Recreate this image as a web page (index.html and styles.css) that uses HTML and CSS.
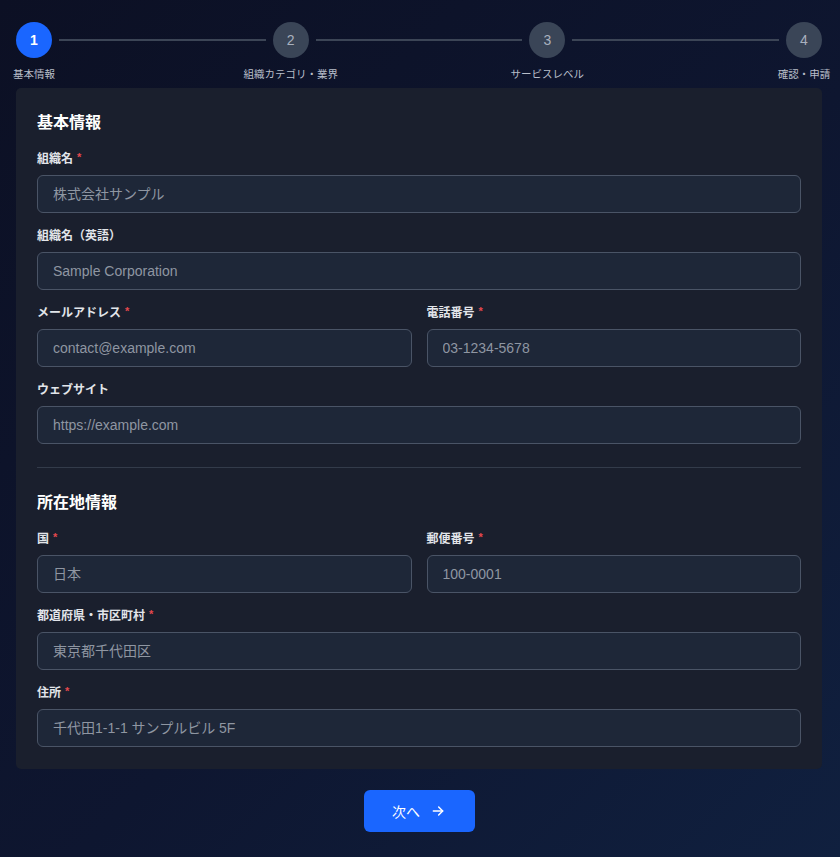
FILE: index.html
```html
<!DOCTYPE html>
<html lang="ja">
<head>
    <meta charset="UTF-8">
    <meta name="viewport" content="width=device-width, initial-scale=1.0">
    <title>組織登録</title>
    <link rel="stylesheet" href="styles.css">
</head>
<body>

    <!-- ステップ表示 -->
    <div class="stepper">
        <div class="step active">
            <div class="step-circle">1</div>
            <div class="step-label">基本情報</div>
        </div>
        <div class="step-line"></div>
        <div class="step">
            <div class="step-circle">2</div>
            <div class="step-label">組織カテゴリ・業界</div>
        </div>
        <div class="step-line"></div>
        <div class="step">
            <div class="step-circle">3</div>
            <div class="step-label">サービスレベル</div>
        </div>
        <div class="step-line"></div>
        <div class="step">
            <div class="step-circle">4</div>
            <div class="step-label">確認・申請</div>
        </div>
    </div>

    <!-- フォーム -->
    <div class="card">
        <h2 class="section-title">基本情報</h2>

        <div class="field">
            <label>組織名<span class="req">*</span></label>
            <input type="text" placeholder="株式会社サンプル">
        </div>
        <div class="field">
            <label>組織名（英語）</label>
            <input type="text" placeholder="Sample Corporation">
        </div>
        <div class="row">
            <div class="field">
                <label>メールアドレス<span class="req">*</span></label>
                <input type="email" placeholder="contact@example.com">
            </div>
            <div class="field">
                <label>電話番号<span class="req">*</span></label>
                <input type="tel" placeholder="03-1234-5678">
            </div>
        </div>
        <div class="field">
            <label>ウェブサイト</label>
            <input type="url" placeholder="https://example.com">
        </div>

        <hr class="divider">

        <h2 class="section-title">所在地情報</h2>

        <div class="row">
            <div class="field">
                <label>国<span class="req">*</span></label>
                <input type="text" placeholder="日本">
            </div>
            <div class="field">
                <label>郵便番号<span class="req">*</span></label>
                <input type="text" placeholder="100-0001">
            </div>
        </div>
        <div class="field">
            <label>都道府県・市区町村<span class="req">*</span></label>
            <input type="text" placeholder="東京都千代田区">
        </div>
        <div class="field last">
            <label>住所<span class="req">*</span></label>
            <input type="text" placeholder="千代田1-1-1 サンプルビル 5F">
        </div>
    </div>

    <div class="actions">
        <button class="next-button">
            次へ
            <svg width="16" height="16" viewBox="0 0 24 24" fill="none" stroke="currentColor" stroke-width="2.2" stroke-linecap="round" stroke-linejoin="round">
                <path d="M5 12h14"/>
                <path d="M13 6l6 6-6 6"/>
            </svg>
        </button>
    </div>

</body>
</html>
```

FILE: styles.css
```css
* {
    margin: 0;
    padding: 0;
    box-sizing: border-box;
}

html, body {
    min-height: 100%;
}

body {
    background: linear-gradient(135deg, #0c1024 0%, #0e1630 55%, #10203f 100%);
    font-family: "Liberation Sans", "Noto Sans CJK JP", sans-serif;
    color: #e5e7eb;
    padding: 22px 18px 20px 16px;
    min-height: 857px;
}

/* ステップ */
.stepper {
    display: flex;
    align-items: flex-start;
}

.step {
    width: 36px;
    display: flex;
    flex-direction: column;
    align-items: center;
    flex-shrink: 0;
}

.step-circle {
    width: 36px;
    height: 36px;
    border-radius: 50%;
    background-color: #3a4557;
    color: #a9b1be;
    display: flex;
    justify-content: center;
    align-items: center;
    font-size: 14px;
}

.step.active .step-circle {
    background-color: #1a66ff;
    color: #fff;
    font-weight: bold;
}

.step-label {
    margin-top: 9px;
    font-size: 10.5px;
    line-height: 14px;
    color: #b8bec9;
    white-space: nowrap;
}

.step-line {
    flex: 1;
    height: 2px;
    background-color: #3c4556;
    margin: 17px 7px 0;
}

/* カード */
.card {
    margin-top: 7px;
    background-color: #1a1f2d;
    border-radius: 5px;
    padding: 23px 21px 22px;
}

.section-title {
    font-size: 16px;
    line-height: 24px;
    font-weight: bold;
    color: #fff;
    margin-bottom: 15px;
}

.field {
    margin-bottom: 14px;
}

.field.last {
    margin-bottom: 0;
}

.row {
    display: flex;
    gap: 15px;
}

.row .field {
    flex: 1;
}

label {
    display: block;
    font-size: 12px;
    line-height: 18px;
    font-weight: bold;
    color: #e2e5ea;
    margin-bottom: 7px;
}

.req {
    color: #e5484d;
    font-size: 11px;
    margin-left: 4px;
    position: relative;
    top: -2px;
}

input {
    width: 100%;
    height: 38px;
    padding: 0 15px;
    background-color: #1e2738;
    border: 1px solid #4a5466;
    border-radius: 6px;
    font-family: inherit;
    font-size: 14px;
    color: #e5e7eb;
    outline: none;
}

input::placeholder {
    color: #8f96a2;
}

.divider {
    border: none;
    border-top: 1px solid #333b4a;
    margin: 23px 0;
}

/* ボタン */
.actions {
    display: flex;
    justify-content: center;
    margin-top: 21px;
}

.next-button {
    display: flex;
    align-items: center;
    gap: 10px;
    width: 111px;
    height: 42px;
    justify-content: center;
    background-color: #1a66ff;
    color: #fff;
    border: none;
    border-radius: 6px;
    font-family: inherit;
    font-size: 14px;
    cursor: pointer;
}
```
